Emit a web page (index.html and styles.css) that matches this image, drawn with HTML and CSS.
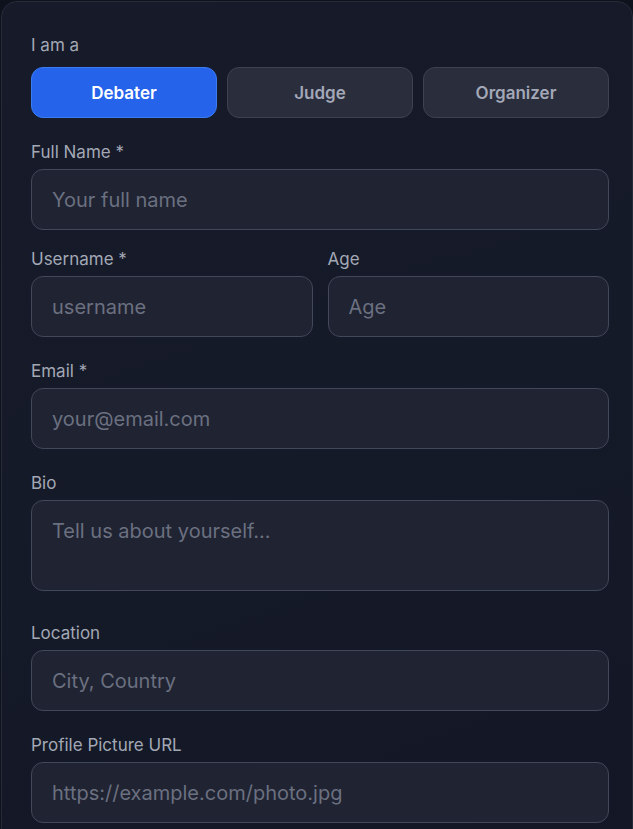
FILE: index.html
```html
<!DOCTYPE html>
<html lang="en">
<head>
<meta charset="utf-8">
<title>Sign up</title>
<link rel="stylesheet" href="styles.css">
</head>
<body>
<div class="card">
  <div class="field">
    <div class="label role-label">I am a</div>
    <div class="roles">
      <button class="role active">Debater</button>
      <button class="role">Judge</button>
      <button class="role">Organizer</button>
    </div>
  </div>
  <div class="field tight">
    <div class="label">Full Name *</div>
    <input class="input" type="text" placeholder="Your full name">
  </div>
  <div class="row">
    <div class="field">
      <div class="label">Username *</div>
      <input class="input" type="text" placeholder="username">
    </div>
    <div class="field">
      <div class="label">Age</div>
      <input class="input" type="text" placeholder="Age">
    </div>
  </div>
  <div class="field">
    <div class="label">Email *</div>
    <input class="input" type="text" placeholder="your@email.com">
  </div>
  <div class="field wide">
    <div class="label">Bio</div>
    <textarea class="input textarea" placeholder="Tell us about yourself..."></textarea>
  </div>
  <div class="field">
    <div class="label">Location</div>
    <input class="input" type="text" placeholder="City, Country">
  </div>
  <div class="field">
    <div class="label">Profile Picture URL</div>
    <input class="input" type="text" placeholder="https://example.com/photo.jpg">
  </div>
</div>
</body>
</html>
```

FILE: styles.css
```css
* { box-sizing: border-box; }
html, body { margin: 0; padding: 0; }
body {
  background: #0e121d;
  font-family: Inter, "Noto Sans", sans-serif;
  overflow: hidden;
}
.card {
  margin: 1px 0 0 1px;
  width: 632px;
  min-height: 900px;
  border: 1px solid #262b3a;
  border-radius: 16px;
  background: linear-gradient(160deg, #161a29 0%, #151a28 50%, #131725 100%);
  padding: 33px 23px 0 29px;
  display: flex;
  flex-direction: column;
}
.field { display: flex; flex-direction: column; margin-bottom: 24px; }
.field.tight { margin-bottom: 19px; }
.field.wide { margin-bottom: 32px; }
.label {
  font-size: 17px;
  line-height: 20px;
  color: #a3a8b5;
  margin-bottom: 7px;
}
.label.role-label { margin-bottom: 12px; }
.roles { display: grid; grid-template-columns: 1fr 1fr 1fr; gap: 10px; }
.role {
  height: 51px;
  border-radius: 12px;
  border: 1px solid #3d4151;
  background: #2a2d3b;
  color: #a3a8b8;
  font-family: Inter, sans-serif;
  font-size: 17px;
  font-weight: 600;
  padding: 0;
}
.role.active {
  background: #2563eb;
  border-color: #3b7cf2;
  color: #ffffff;
}
.row { display: grid; grid-template-columns: 1fr 1fr; gap: 15px; }
.input {
  display: block;
  width: 100%;
  height: 61px;
  border: 1px solid #42475a;
  border-radius: 12px;
  background: #1f2332;
  padding: 0 20px;
  font-family: Inter, sans-serif;
  font-size: 20px;
  color: #e5e7eb;
  outline: none;
}
.input::placeholder { color: #6b7080; }
.textarea {
  height: 91px;
  padding: 16px 20px;
  line-height: 28px;
  resize: none;
}
```
